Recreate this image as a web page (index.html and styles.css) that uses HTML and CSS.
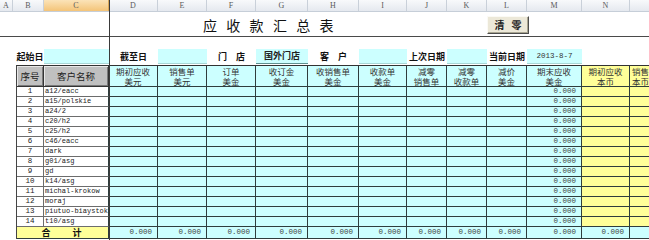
FILE: index.html
```html
<!DOCTYPE html>
<html lang="zh-CN">
<head>
<meta charset="utf-8">
<title>应收款汇总表</title>
<link rel="stylesheet" href="styles.css">
</head>
<body>
<div class="sheet">
  <div class="colhead">
    <span>A</span><span>B</span><span class="sel">C</span><span>D</span><span>E</span><span>F</span><span>G</span><span>H</span><span>I</span><span>J</span><span>K</span><span>L</span><span>M</span><span>N</span><span></span>
  </div>

  <div class="titlerow">
    <div class="title">应收款汇总表</div>
    <button class="btn"><span>清</span><span>零</span></button>
  </div>

  <div class="inforow">
    <div></div>
    <div class="lbl">起始日</div>
    <div class="inp"></div>
    <div class="lbl">截至日</div>
    <div class="inp"></div>
    <div class="lbl">门　店</div>
    <div class="inp strong">国外门店</div>
    <div class="lbl">客　户</div>
    <div class="inp"></div>
    <div class="lbl">上次日期</div>
    <div class="inp"></div>
    <div class="lbl">当前日期</div>
    <div class="inp date">2013-8-7</div>
    <div></div>
    <div></div>
  </div>

  <div class="tbl">
    <div class="h g">序号</div>
    <div class="h g">客户名称</div>
    <div class="h c"><span>期初应收</span><span>美元</span></div>
    <div class="h c"><span>销售单</span><span>美元</span></div>
    <div class="h c"><span>订单</span><span>美金</span></div>
    <div class="h c"><span>收订金</span><span>美金</span></div>
    <div class="h c"><span>收销售单</span><span>美金</span></div>
    <div class="h c"><span>收款单</span><span>美金</span></div>
    <div class="h c"><span>减零</span><span>销售单</span></div>
    <div class="h c"><span>减零</span><span>收款单</span></div>
    <div class="h c"><span>减价</span><span>美金</span></div>
    <div class="h c"><span>期末应收</span><span>美金</span></div>
    <div class="h y"><span>期初应收</span><span>本币</span></div>
    <div class="h y left"><span>销售单</span><span>本币</span></div>

    <div class="n">1</div><div class="nm">a12/eacc</div><div class="c"></div><div class="c"></div><div class="c"></div><div class="c"></div><div class="c"></div><div class="c"></div><div class="c"></div><div class="c"></div><div class="c"></div><div class="c v">0.000</div><div class="y"></div><div class="y"></div>
    <div class="n">2</div><div class="nm">a15/polskie</div><div class="c"></div><div class="c"></div><div class="c"></div><div class="c"></div><div class="c"></div><div class="c"></div><div class="c"></div><div class="c"></div><div class="c"></div><div class="c v">0.000</div><div class="y"></div><div class="y"></div>
    <div class="n">3</div><div class="nm">a24/2</div><div class="c"></div><div class="c"></div><div class="c"></div><div class="c"></div><div class="c"></div><div class="c"></div><div class="c"></div><div class="c"></div><div class="c"></div><div class="c v">0.000</div><div class="y"></div><div class="y"></div>
    <div class="n">4</div><div class="nm">c20/h2</div><div class="c"></div><div class="c"></div><div class="c"></div><div class="c"></div><div class="c"></div><div class="c"></div><div class="c"></div><div class="c"></div><div class="c"></div><div class="c v">0.000</div><div class="y"></div><div class="y"></div>
    <div class="n">5</div><div class="nm">c25/h2</div><div class="c"></div><div class="c"></div><div class="c"></div><div class="c"></div><div class="c"></div><div class="c"></div><div class="c"></div><div class="c"></div><div class="c"></div><div class="c v">0.000</div><div class="y"></div><div class="y"></div>
    <div class="n">6</div><div class="nm">c46/eacc</div><div class="c"></div><div class="c"></div><div class="c"></div><div class="c"></div><div class="c"></div><div class="c"></div><div class="c"></div><div class="c"></div><div class="c"></div><div class="c v">0.000</div><div class="y"></div><div class="y"></div>
    <div class="n">7</div><div class="nm">dark</div><div class="c"></div><div class="c"></div><div class="c"></div><div class="c"></div><div class="c"></div><div class="c"></div><div class="c"></div><div class="c"></div><div class="c"></div><div class="c v">0.000</div><div class="y"></div><div class="y"></div>
    <div class="n">8</div><div class="nm">g01/asg</div><div class="c"></div><div class="c"></div><div class="c"></div><div class="c"></div><div class="c"></div><div class="c"></div><div class="c"></div><div class="c"></div><div class="c"></div><div class="c v">0.000</div><div class="y"></div><div class="y"></div>
    <div class="n">9</div><div class="nm">gd</div><div class="c"></div><div class="c"></div><div class="c"></div><div class="c"></div><div class="c"></div><div class="c"></div><div class="c"></div><div class="c"></div><div class="c"></div><div class="c v">0.000</div><div class="y"></div><div class="y"></div>
    <div class="n">10</div><div class="nm">k14/asg</div><div class="c"></div><div class="c"></div><div class="c"></div><div class="c"></div><div class="c"></div><div class="c"></div><div class="c"></div><div class="c"></div><div class="c"></div><div class="c v">0.000</div><div class="y"></div><div class="y"></div>
    <div class="n">11</div><div class="nm">michal-krokow</div><div class="c"></div><div class="c"></div><div class="c"></div><div class="c"></div><div class="c"></div><div class="c"></div><div class="c"></div><div class="c"></div><div class="c"></div><div class="c v">0.000</div><div class="y"></div><div class="y"></div>
    <div class="n">12</div><div class="nm">moraj</div><div class="c"></div><div class="c"></div><div class="c"></div><div class="c"></div><div class="c"></div><div class="c"></div><div class="c"></div><div class="c"></div><div class="c"></div><div class="c v">0.000</div><div class="y"></div><div class="y"></div>
    <div class="n">13</div><div class="nm">piutuo-biaystok</div><div class="c"></div><div class="c"></div><div class="c"></div><div class="c"></div><div class="c"></div><div class="c"></div><div class="c"></div><div class="c"></div><div class="c"></div><div class="c v">0.000</div><div class="y"></div><div class="y"></div>
    <div class="n">14</div><div class="nm">t10/asg</div><div class="c"></div><div class="c"></div><div class="c"></div><div class="c"></div><div class="c"></div><div class="c"></div><div class="c"></div><div class="c"></div><div class="c"></div><div class="c v">0.000</div><div class="y"></div><div class="y"></div>

    <div class="tot"><span>合</span><span>计</span></div>
    <div class="c v t">0.000</div><div class="c v t">0.000</div><div class="c v t">0.000</div><div class="c v t">0.000</div><div class="c v t">0.000</div><div class="c v t">0.000</div><div class="c v t">0.000</div><div class="c v t">0.000</div><div class="c v t">0.000</div><div class="c v t">0.000</div><div class="c v t">0.000</div><div class="c t"></div>
  </div>

  <div class="splitv"></div>
</div>
</body>
</html>
```

FILE: styles.css
```css
* { box-sizing: border-box; margin: 0; padding: 0; }
html, body { width: 649px; height: 240px; overflow: hidden; background: #fff; }
body { font-family: "Noto Sans CJK SC", "Liberation Sans", sans-serif; color: #222; }

.sheet { position: relative; width: 700px; height: 240px; }

/* column letters */
.colhead {
  display: grid;
  grid-template-columns: 13px 31px 65px 49px 49px 49px 52px 51px 48px 40px 40px 40px 55px 48px 60px;
  height: 12px;
  background: linear-gradient(#f8f9fb, #e5e9ef);
  border-bottom: 1px solid #c6ced8;
}
.colhead span {
  font: 8px/11px "Liberation Serif", serif;
  color: #5a5a5a;
  text-align: center;
  border-right: 1px solid #c9d0d9;
}
.colhead .sel { background: linear-gradient(#fbe3b8, #f4c478); border-right-color: #d9a85a; }

/* title row */
.titlerow {
  display: grid;
  grid-template-columns: 109px 378px 42px 1fr;
  height: 25px;
  border-bottom: 1px solid #4a4a4a;
  align-items: center;
}
.title {
  grid-column: 2;
  margin-left: 94px;
  padding-top: 2px;
  font-size: 14px;
  line-height: 16px;
  letter-spacing: 9.3px;
  color: #111;
  white-space: nowrap;
}
.btn {
  grid-column: 3;
  width: 42px;
  height: 18px;
  margin-top: 1px;
  display: flex;
  justify-content: center;
  align-items: center;
  gap: 7px;
  font: 700 10px/10px "Noto Sans CJK SC", sans-serif;
  color: #222;
  background: #ece8d8;
  border: 1px solid;
  border-color: #fbfaf5 #4d4d4d #4d4d4d #fbfaf5;
  box-shadow: inset -1px -1px 0 #a9a591;
}

/* info row */
.inforow {
  display: grid;
  grid-template-columns: 16px 28px 65px 49px 49px 49px 52px 51px 48px 40px 40px 40px 55px 48px 60px;
  height: 15px;
  margin-top: 12px;
}
.inforow > div { height: 15px; }
.lbl {
  font-weight: 700;
  font-size: 9px;
  line-height: 15px;
  text-align: center;
  white-space: nowrap;
  color: #111;
}
.inp {
  background: #ccffff;
  border-bottom: 1px solid #a9d6d6;
  font-size: 9px;
  line-height: 14px;
  text-align: center;
}
.inp.strong { font-weight: 700; border-bottom-color: #5f8f8f; }
.inp.date { font: 7.5px/14px "Liberation Mono", monospace; color: #333; }

/* table */
.tbl {
  display: grid;
  grid-template-columns: 27px 65px 49px 49px 49px 52px 51px 48px 40px 40px 40px 55px 48px 60px;
  grid-template-rows: 21px repeat(14, 10px) 12px;
  width: max-content;
  margin: 1px 0 0 16px;
  border-top: 1px solid #333;
  border-left: 1px solid #444;
}
.tbl > div {
  border-right: 1px solid #2f3d3d;
  border-bottom: 1px solid #2f3d3d;
  overflow: hidden;
  white-space: nowrap;
}
.h {
  display: flex;
  flex-direction: column;
  align-items: center;
  font-size: 8.5px;
  line-height: 10px;
  color: #333;
}
.h span { display: block; height: 10px; }
.h.g {
  justify-content: center;
  background: #c0c0c0;
  font-size: 9.5px;
  color: #222;
  border-right-color: #333;
  border-bottom-color: #333;
  box-shadow: inset 1px 1px 0 #e8e8e8, inset -1px -1px 0 #7a7a7a;
}
.h.left { align-items: flex-start; padding-left: 2px; }
.c { background: #ccffff; }
.y { background: #ffff99; }
.n {
  font: 7.5px/9px "Liberation Mono", monospace;
  text-align: center;
  color: #222;
  border-right-color: #6c6c6c !important;
  border-bottom-color: #6c6c6c !important;
}
.nm {
  font: 7px/9px "Liberation Mono", monospace;
  padding-left: 1px;
  color: #222;
  border-bottom-color: #6c6c6c !important;
}
.v {
  font: 7.5px/9px "Liberation Mono", monospace;
  text-align: right;
  padding-right: 5px;
  color: #444;
}
.v.t { line-height: 11px; }
.tbl > .tot {
  grid-column: 1 / 3;
  background: #ffff99;
  display: flex;
  justify-content: center;
  align-items: center;
  gap: 22px;
  font-weight: 700;
  font-size: 9px;
  line-height: 11px;
  padding-right: 2px;
  color: #111;
  overflow: visible;
}

/* frozen pane divider */
.splitv {
  position: absolute;
  left: 109px;
  top: 0;
  width: 1px;
  height: 240px;
  background: #3a3a3a;
}
```
